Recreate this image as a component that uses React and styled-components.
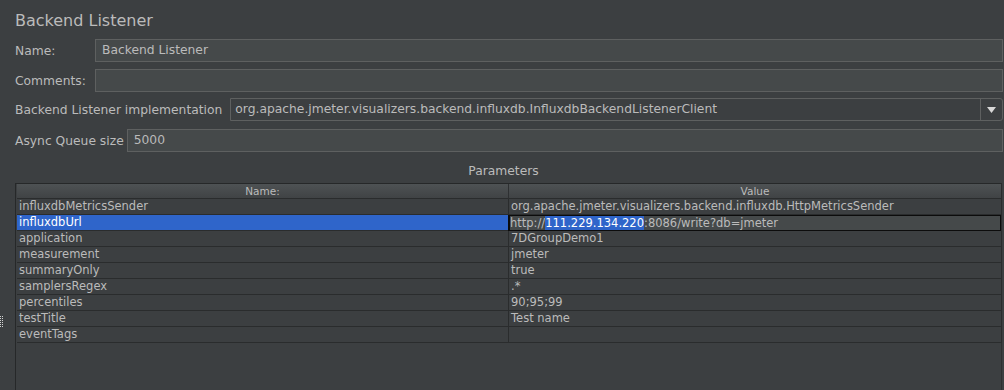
import React from 'react'
import styled, { createGlobalStyle } from 'styled-components'

const GlobalStyle = createGlobalStyle`
  html, body {
    margin: 0;
    padding: 0;
    background: #3c3f41;
  }
`

const Page = styled.div`
  display: flex;
  width: 1004px;
  height: 390px;
  overflow: hidden;
  background: #3c3f41;
  color: #bbbbbb;
  font-family: "DejaVu Sans", "Liberation Sans", sans-serif;
`

const Gutter = styled.div`
  width: 15px;
  flex: none;
  padding-top: 316px;
  box-sizing: border-box;
`

const Grip = styled.div`
  width: 4px;
  height: 12px;
  background-image:
    linear-gradient(90deg, transparent 1px, #3c3f41 1px),
    repeating-linear-gradient(#d0d0d0 0 1px, transparent 1px 2px);
  background-size: 2px 2px, 2px 2px;
`

const Main = styled.div`
  flex: 1;
  display: flex;
  flex-direction: column;
  padding-top: 10px;
  padding-right: 1px;
  min-width: 0;
`

const Title = styled.div`
  font-size: 16px;
  line-height: 22px;
  height: 22px;
  margin-bottom: 7px;
`

const Row = styled.div`
  display: flex;
  align-items: center;
  height: 23px;
  margin-bottom: ${p => p.$gap ?? 7}px;
`

const Label = styled.div`
  font-size: 12.3px;
  white-space: nowrap;
  width: ${p => (p.$width ? `${p.$width}px` : 'auto')};
  flex: none;
  padding-right: ${p => p.$pad ?? 0}px;
`

const Field = styled.div`
  flex: 1;
  height: 23px;
  box-sizing: border-box;
  border: 1px solid #5e6060;
  background: #45494a;
  font-size: 12.3px;
  line-height: 21px;
  padding-left: 6px;
  white-space: nowrap;
  overflow: hidden;
`

const Combo = styled.div`
  flex: 1;
  display: flex;
  height: 23px;
  box-sizing: border-box;
  border: 1px solid #5e6060;
  border-radius: 0 3px 3px 0;
  background: #3c3f41;
`

const ComboText = styled.div`
  flex: 1;
  font-size: 12.3px;
  line-height: 21px;
  padding-left: 4px;
  white-space: nowrap;
  overflow: hidden;
`

const ComboArrow = styled.div`
  width: 21px;
  border-left: 1px solid #5e6060;
  display: flex;
  align-items: center;
  justify-content: center;
`

const Section = styled.div`
  text-align: center;
  font-size: 12.3px;
  line-height: 18px;
  margin-top: 10px;
  margin-bottom: 3px;
  padding-right: 11px;
`

const Table = styled.div`
  flex: 1;
  width: 987px;
  box-sizing: border-box;
  border-left: 1px solid #262829;
  border-top: 1px solid #262829;
  border-right: 1px solid #2e3031;
  display: flex;
  flex-direction: column;
  padding-left: 1px;
`

const Grid = styled.div`
  display: grid;
  grid-template-columns: 491px 1fr;
  width: 984px;
  border-right: 1px solid #2a2c2d;
`

const HeadCell = styled.div`
  height: 15px;
  box-sizing: border-box;
  background: linear-gradient(#4e5254, #404345);
  border-bottom: 1px solid #2a2c2d;
  border-left: ${p => (p.$first ? 'none' : '1px solid #2e3032')};
  font-size: 10.5px;
  line-height: 14px;
  text-align: center;
  color: #bbbbbb;
`

const Cell = styled.div`
  height: 16px;
  box-sizing: border-box;
  border-bottom: 1px solid #2a2c2d;
  border-left: ${p => (p.$first ? 'none' : '1px solid #2a2c2d')};
  background: ${p => (p.$selected ? '#2f65ca' : 'transparent')};
  color: ${p => (p.$selected ? '#ffffff' : '#bbbbbb')};
  font-size: 11.5px;
  line-height: 15px;
  padding-left: 2px;
  white-space: nowrap;
  overflow: hidden;
`

const EditCell = styled.div`
  height: 16px;
  box-sizing: border-box;
  border: 1px solid #0c0c0c;
  border-left: 2px solid #0c0c0c;
  background: #45494a;
  font-size: 11.5px;
  line-height: 14px;
  white-space: nowrap;
  overflow: hidden;
`

const Selection = styled.span`
  background: #2f65ca;
  color: #ffffff;
`

const params = [
  ['influxdbMetricsSender', 'org.apache.jmeter.visualizers.backend.influxdb.HttpMetricsSender'],
  ['influxdbUrl', null],
  ['application', '7DGroupDemo1'],
  ['measurement', 'jmeter'],
  ['summaryOnly', 'true'],
  ['samplersRegex', '.*'],
  ['percentiles', '90;95;99'],
  ['testTitle', 'Test name'],
  ['eventTags', ''],
]

function App() {
  return (
    <>
      <GlobalStyle />
      <Page>
        <Gutter>
          <Grip />
        </Gutter>
        <Main>
          <Title>Backend Listener</Title>
          <Row>
            <Label $width={80}>Name:</Label>
            <Field>Backend Listener</Field>
          </Row>
          <Row $gap={6}>
            <Label $width={80}>Comments:</Label>
            <Field />
          </Row>
          <Row $gap={8}>
            <Label $pad={8}>Backend Listener implementation</Label>
            <Combo>
              <ComboText>org.apache.jmeter.visualizers.backend.influxdb.InfluxdbBackendListenerClient</ComboText>
              <ComboArrow>
                <svg width="9" height="6" viewBox="0 0 9 6">
                  <path d="M0 0 L9 0 L4.5 6 Z" fill="#d8d8d8" />
                </svg>
              </ComboArrow>
            </Combo>
          </Row>
          <Row $gap={0}>
            <Label $pad={3}>Async Queue size</Label>
            <Field>5000</Field>
          </Row>
          <Section>Parameters</Section>
          <Table>
            <Grid>
              <HeadCell $first>Name:</HeadCell>
              <HeadCell>Value</HeadCell>
              {params.map(([name, value]) =>
                value === null ? (
                  <React.Fragment key={name}>
                    <Cell $first $selected>{name}</Cell>
                    <EditCell>
                      http://<Selection>111.229.134.220</Selection>:8086/write?db=jmeter
                    </EditCell>
                  </React.Fragment>
                ) : (
                  <React.Fragment key={name}>
                    <Cell $first>{name}</Cell>
                    <Cell>{value}</Cell>
                  </React.Fragment>
                )
              )}
            </Grid>
          </Table>
        </Main>
      </Page>
    </>
  )
}

export default App
